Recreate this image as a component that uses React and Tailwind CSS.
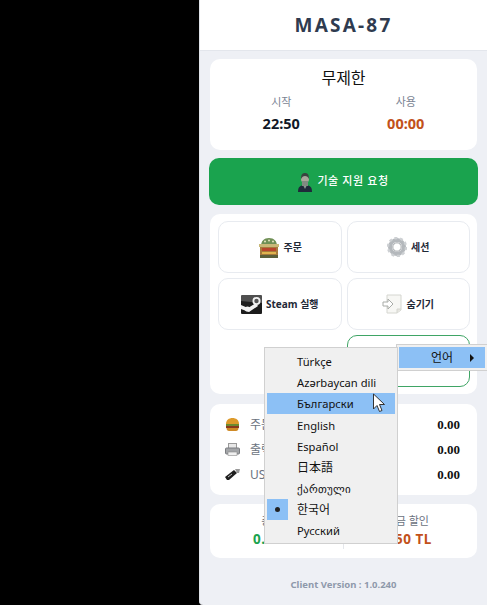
import React from 'react';

const FONT = "font-['Noto_Sans','Noto_Sans_CJK_KR',sans-serif]";

const languages = ['Türkçe', 'Azərbaycan dili', 'Български', 'English', 'Español', '日本語', 'ქართული', '한국어', 'Русский'];

const AgentIcon = () => (
  <svg width="14" height="20" viewBox="0 0 14 20">
    <path d="M0 20c0-5 2-7 7-7s7 2 7 7z" fill="#1f2a3a" />
    <path d="M5 13l2 4 2-4z" fill="#8a9a94" />
    <circle cx="7" cy="7" r="4" fill="#a9a79b" />
    <path d="M3 7c0-4 1-6 4-6s4 2 4 6c-1-2-2-3-4-3S4 5 3 7z" fill="#39443f" />
    <rect x="4" y="9" width="6" height="5" fill="#7f8a82" />
  </svg>
);

const ShopIcon = () => (
  <svg width="22" height="21" viewBox="0 0 22 21">
    <rect x="2" y="9" width="18" height="12" fill="#a87a3c" />
    <path d="M3 9c0-5 3-8 8-8s8 3 8 8z" fill="#6f8f55" />
    <rect x="1" y="7" width="20" height="3" fill="#c9b878" />
    <rect x="4" y="11" width="14" height="3" fill="#b9442c" />
    <rect x="4" y="15" width="14" height="2" fill="#e0b44e" />
    <rect x="2" y="18" width="18" height="3" fill="#5c5f3a" />
    <circle cx="7" cy="4.5" r="1" fill="#e7e3c0" />
    <circle cx="11" cy="3.5" r="1" fill="#e7e3c0" />
    <circle cx="15" cy="4.5" r="1" fill="#e7e3c0" />
  </svg>
);

const GearIcon = () => (
  <svg width="20" height="20" viewBox="0 0 20 20">
    <circle cx="10" cy="10" r="7" fill="none" stroke="#b4b8bc" strokeWidth="4" />
    <circle cx="10" cy="10" r="9" fill="none" stroke="#cdd0d3" strokeWidth="2.4" strokeDasharray="3 2.65" />
    <circle cx="10" cy="10" r="4.2" fill="#fff" stroke="#8b9096" strokeWidth="0.8" />
  </svg>
);

const SteamIcon = () => (
  <svg width="21" height="19" viewBox="0 0 21 19">
    <rect width="21" height="19" rx="1" fill="#1c1c1c" />
    <path d="M0 0h21v8L0 6z" fill="#e8e8e8" opacity="0.25" />
    <path d="M0 10l7 3 8-5 2 3-9 6-8-3z" fill="#f2f2f2" />
    <circle cx="15.5" cy="6" r="4" fill="#f2f2f2" />
    <circle cx="15.5" cy="6" r="2.2" fill="#555" />
    <circle cx="6.5" cy="14" r="2.6" fill="#f2f2f2" />
  </svg>
);

const HideIcon = () => (
  <svg width="20" height="20" viewBox="0 0 20 20">
    <path d="M5 1h14v15l-4 3H5z" fill="#f7f7f4" stroke="#d5d6d0" />
    <path d="M15 19v-4h4" fill="#e6e6e0" stroke="#d5d6d0" />
    <path d="M1 8h5V5l5 5-5 5v-3H1z" fill="#fff" stroke="#a9aca8" />
  </svg>
);

const BurgerIcon = () => (
  <svg width="15" height="15" viewBox="0 0 15 15">
    <path d="M1 7c0-4 3-6 6.500-6S14 3 14 7z" fill="#dd9a2a" />
    <rect x="1" y="7" width="13" height="2" fill="#6c8a2f" />
    <rect x="1" y="9" width="13" height="2" fill="#8a3a1d" />
    <path d="M1.500 11h12c0 2-1 3-2.500 3H4c-1.500 0-2.500-1-2.500-3z" fill="#cf8a26" />
  </svg>
);

const PrinterIcon = () => (
  <svg width="15" height="13" viewBox="0 0 15 13">
    <rect x="3.500" y="0.500" width="8" height="5" fill="#e8e8e8" stroke="#9a9a9a" />
    <rect x="0.500" y="5" width="14" height="6" rx="1" fill="#a3a5a8" stroke="#7b7d80" />
    <rect x="3" y="9" width="9" height="3.500" fill="#f0f0f0" stroke="#8a8a8a" strokeWidth="0.6" />
  </svg>
);

const UsbIcon = () => (
  <svg width="15" height="11" viewBox="0 0 15 11">
    <path d="M0 8l9-7 3 3-8 7H2z" fill="#1f1f1f" />
    <path d="M10 0l5 0-1 4-2 0z" fill="#9a9a9a" />
    <path d="M3 8l4-3" stroke="#e8e8e8" strokeWidth="0.8" />
  </svg>
);

const Tile = ({ icon, label }) => (
  <div className="h-[52px] flex items-center justify-center gap-1 bg-white border border-[#e8ebf0] rounded-[10px]">
    {icon}
    <span className="text-[10px] font-bold text-[#1f2937]">{label}</span>
  </div>
);

const StatRow = ({ icon, label, value }) => (
  <div className="h-[25px] flex items-center">
    <span className="w-[24px] flex justify-center">{icon}</span>
    <span className="ml-[6px] text-xs text-[#6b7280]">{label}</span>
    <span className="ml-auto text-[13px] font-bold text-[#111] font-['Liberation_Serif',serif]">{value}</span>
  </div>
);

export default function App() {
  return (
    <div className={`relative w-[487px] h-[605px] bg-black overflow-hidden flex justify-end ${FONT}`}>
      <div className="w-[288px] h-full bg-[#eef0f5] rounded-bl-[4px] border-l border-[#dfe2e8] flex flex-col">
        {/* Header */}
        <div className="h-[51px] shrink-0 bg-white border-b border-[#e3e6ec] flex items-center justify-center">
          <span className="text-[19px] font-bold tracking-[2.200px] text-[#2f3b4f]">MASA-87</span>
        </div>

        <div className="px-[10px] pt-2 flex flex-col">
          {/* Session card */}
          <div className="h-[91px] bg-white rounded-[10px] flex flex-col items-center pt-[7px] px-[9px]">
            <div className="text-base leading-6 text-[#111]">무제한</div>
            <div className="w-full grid grid-cols-2 text-center mt-[4px]">
              <div>
                <div className="text-[11px] leading-4 text-[#7b8494]">시작</div>
                <div className="text-[14.500px] leading-5 mt-[3px] font-bold text-[#111827]">22:50</div>
              </div>
              <div>
                <div className="text-[11px] leading-4 text-[#7b8494]">사용</div>
                <div className="text-[14.500px] leading-5 mt-[3px] font-bold text-[#c2511a]">00:00</div>
              </div>
            </div>
          </div>

          {/* Support button */}
          <div className="h-[47px] -mx-[1px] mt-2 bg-[#1aa34e] rounded-[10px] flex items-center justify-center gap-[5px]">
            <AgentIcon />
            <span className="text-[11px] font-medium tracking-[0.600px] text-white">기술 지원 요청</span>
          </div>

          {/* Actions */}
          <div className="h-[180px] mt-[9px] bg-white rounded-[10px] pl-2 pr-[7px] pt-[7px] grid grid-cols-2 gap-[5px] content-start">
            <Tile icon={<ShopIcon />} label="주문" />
            <Tile icon={<GearIcon />} label="세션" />
            <Tile icon={<SteamIcon />} label="Steam 실행" />
            <Tile icon={<HideIcon />} label="숨기기" />
            <div />
            <div className="h-[52px] bg-white border border-[#3fa565] rounded-[10px]" />
          </div>

          {/* Consumption */}
          <div className="h-[91px] mt-[10px] bg-white rounded-[10px] pl-[10px] pr-[17px] py-[8px]">
            <StatRow icon={<BurgerIcon />} label="주문" value="0.00" />
            <StatRow icon={<PrinterIcon />} label="출력" value="0.00" />
            <StatRow icon={<UsbIcon />} label="USB" value="0.00" />
          </div>

          {/* Totals */}
          <div className="h-[54px] mt-[9px] bg-white rounded-[10px] grid grid-cols-2 text-center items-start pt-[9px]">
            <div className="border-r border-[#e5e7eb] pl-[3px]">
              <div className="text-[11px] leading-4 text-[#6b7280]">총 금액</div>
              <div className="text-[13.500px] leading-5 font-bold tracking-[0.500px] text-[#1aa34e]">0.00 TL</div>
            </div>
            <div className="pr-[6px]">
              <div className="text-[11px] leading-4 text-[#6b7280]">요금 할인</div>
              <div className="text-[13.500px] leading-5 font-bold tracking-[0.500px] text-[#c2511a]">0.50 TL</div>
            </div>
          </div>

          <div className="mt-[20px] text-center text-[9.500px] font-bold text-[#8e99ab]">Client Version : 1.0.240</div>
        </div>
      </div>

      {/* Context menu */}
      <div className="absolute left-[396px] top-[344px] w-[92px] h-[27px] bg-[#f0f0f0] border border-[#d0d0d0] p-[2px] text-[#111]">
        <div className="h-[21px] bg-[#8cc0f5] flex items-center pl-[32px] text-xs">
          언어
          <span className="ml-[17px] w-0 h-0 border-y-[4px] border-y-transparent border-l-[4px] border-l-[#111]" />
        </div>
      </div>

      {/* Language submenu */}
      <div className="absolute left-[264px] top-[347px] w-[134px] h-[197px] bg-[#f0f0f0] border border-[#d0d0d0] p-[2px] text-[#111]">
        {languages.map((lang, i) => (
          <div key={lang} className={`h-[21.300px] flex items-center pl-[30px] relative ${i === 5 || i === 7 ? 'text-[12px]' : 'text-[11.200px]'} ${i < 5 ? 'pt-[3px]' : ''} ${i === 5 || i === 6 ? 'pt-[1px]' : ''} ${i === 2 ? 'bg-[#8cc0f5]' : ''}`}>
            {i === 7 && (
              <span className="absolute left-0 top-0 w-[21px] h-full bg-[#8cc0f5] flex items-center justify-center">
                <span className="w-[5px] h-[5px] rounded-full bg-[#222]" />
              </span>
            )}
            {lang}
          </div>
        ))}
      </div>

      {/* Cursor */}
      <svg className="absolute left-[372px] top-[393px]" width="14" height="20" viewBox="0 0 14 20">
        <path d="M1.500 1v15l3.500-3.500 2.500 6 2.500-1-2.500-6h5z" fill="#fff" stroke="#333" strokeWidth="1" />
      </svg>
    </div>
  );
}
